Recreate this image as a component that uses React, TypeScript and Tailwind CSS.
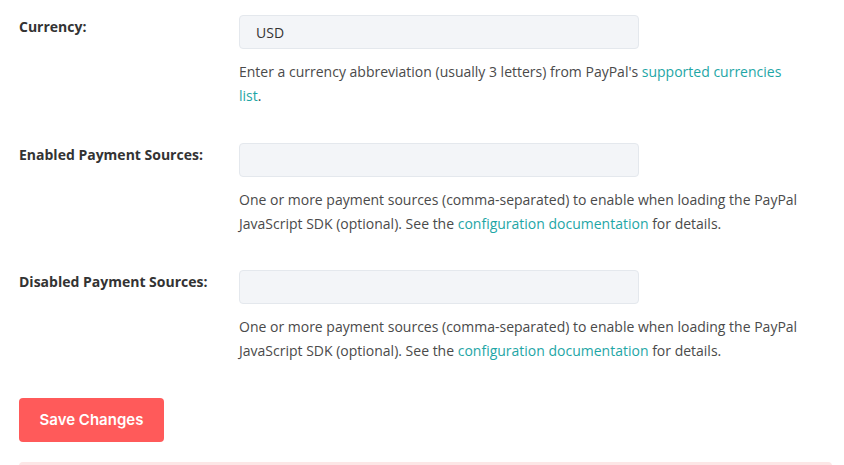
import React from "react";

const font = { fontFamily: '"Open Sans", "Liberation Sans", sans-serif' };

function Row({
  label,
  value,
  children,
  gap,
}: {
  label: string;
  value?: string;
  children: React.ReactNode;
  gap: string;
}) {
  return (
    <div className={`flex items-start ${gap}`}>
      <div className="w-[220px] shrink-0 text-[14px] font-bold leading-[24px] text-[#333333]">{label}</div>
      <div className="flex flex-col">
        <div className="flex h-[34px] w-[400px] items-center rounded-[4px] border border-[#e4e8ed] bg-[#f3f5f8] px-[16px] text-[14px] text-[#333333]">
          {value}
        </div>
        <p className="mt-[11px] w-[562px] text-[14px] leading-[24px] text-[#4a4a4a]">{children}</p>
      </div>
    </div>
  );
}

const Link = ({ children }: { children: React.ReactNode }) => (
  <a className="text-[#1ea6a6]" href="#">
    {children}
  </a>
);

export default function App() {
  return (
    <div className="min-h-[465px] w-[844px] overflow-hidden bg-white pl-[19px] pr-[12px] pt-[15px]" style={font}>
      <Row label="Currency:" value="USD" gap="mb-[35px]">
        Enter a currency abbreviation (usually 3 letters) from PayPal's <Link>supported currencies list</Link>.
      </Row>
      <Row label="Enabled Payment Sources:" gap="mb-[34px]">
        One or more payment sources (comma-separated) to enable when loading the PayPal JavaScript SDK (optional). See
        the <Link>configuration documentation</Link> for details.
      </Row>
      <Row label="Disabled Payment Sources:" gap="mb-0">
        One or more payment sources (comma-separated) to enable when loading the PayPal JavaScript SDK (optional). See
        the <Link>configuration documentation</Link> for details.
      </Row>
      <button
        className="mt-[35px] flex h-[44px] w-[145px] items-center justify-center rounded-[4px] bg-[#ff5a5a] text-[15px] font-semibold text-white"
        style={{ fontFamily: 'Inter, "Open Sans", sans-serif' }}
      >
        Save Changes
      </button>
      <div className="mt-[20px] h-[20px] rounded-t-[4px] bg-[#fde6e6]" />
    </div>
  );
}
